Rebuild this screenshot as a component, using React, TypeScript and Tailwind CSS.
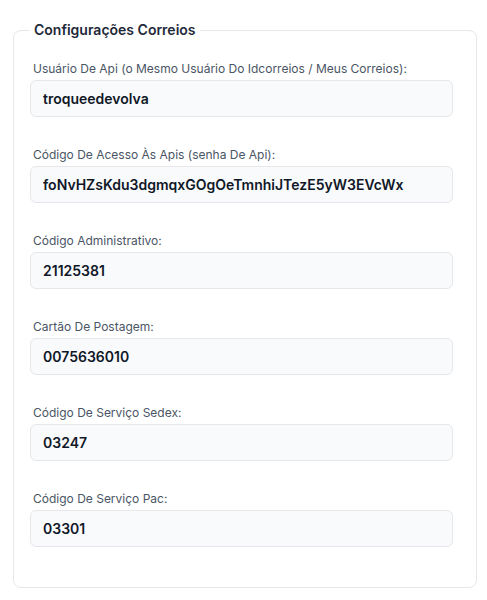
import React from 'react';

const fields = [
  { label: 'Usuário De Api (o Mesmo Usuário Do Idcorreios / Meus Correios):', value: 'troqueedevolva' },
  { label: 'Código De Acesso Às Apis (senha De Api):', value: 'foNvHZsKdu3dgmqxGOgOeTmnhiJTezE5yW3EVcWx' },
  { label: 'Código Administrativo:', value: '21125381' },
  { label: 'Cartão De Postagem:', value: '0075636010' },
  { label: 'Código De Serviço Sedex:', value: '03247' },
  { label: 'Código De Serviço Pac:', value: '03301' },
];

const App: React.FC = () => {
  return (
    <div className="min-h-screen bg-white pt-[20px] font-['Inter',sans-serif]">
      <fieldset className="ml-[13px] w-[464px] rounded-lg border border-gray-200 pl-4 pr-[23px] pb-[40px]">
        <legend className="px-1 text-sm leading-5 font-semibold text-gray-800">Configurações Correios</legend>
        <div className="flex flex-col gap-[29px] pt-5">
          {fields.map((f) => (
            <div key={f.label} className="flex flex-col">
              <label className="pl-[3px] text-xs leading-[18px] text-gray-600 mb-[2px]">{f.label}</label>
              <input
                readOnly
                value={f.value}
                className="h-[37px] w-full rounded-md border border-gray-200 bg-gray-50 px-3 text-sm font-semibold text-gray-900 outline-none"
              />
            </div>
          ))}
        </div>
      </fieldset>
    </div>
  );
};

export default App;
